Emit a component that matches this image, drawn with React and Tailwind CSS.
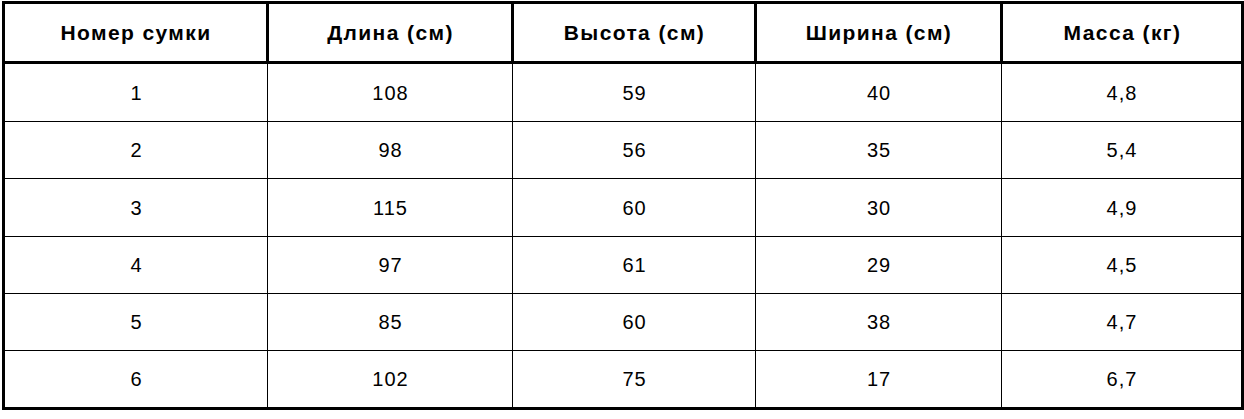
import React from "react";

const headers = ["Номер сумки", "Длина (см)", "Высота (см)", "Ширина (см)", "Масса (кг)"];
const rows = [
  ["1", "108", "59", "40", "4,8"],
  ["2", "98", "56", "35", "5,4"],
  ["3", "115", "60", "30", "4,9"],
  ["4", "97", "61", "29", "4,5"],
  ["5", "85", "60", "38", "4,7"],
  ["6", "102", "75", "17", "6,7"],
];

const rowH = ["h-[59px]", "h-[57px]", "h-[58px]", "h-[57px]", "h-[57px]", "h-[58px]"];

export default function App() {
  return (
    <div className="w-[1244px] h-[419px] bg-white pl-[2px] pt-[1px]" style={{ fontFamily: '"Liberation Sans", Arial, sans-serif' }}>
      <table className="table-fixed border-collapse border-[3px] border-black text-black w-[1239px]">
        <colgroup>
          <col className="w-[264px]" />
          <col className="w-[245px]" />
          <col className="w-[243px]" />
          <col className="w-[246px]" />
          <col className="w-[241px]" />
        </colgroup>
        <thead>
          <tr className="h-[60px]">
            {headers.map((h) => (
              <th key={h} className="border-[3px] border-black font-bold text-[21px] tracking-[1.4px] text-center align-middle p-0 pl-[1px]">
                {h}
              </th>
            ))}
          </tr>
        </thead>
        <tbody>
          {rows.map((r, i) => (
            <tr key={i} className={rowH[i]}>
              {r.map((c, j) => (
                <td key={j} className="border border-black text-[20px] tracking-[1px] text-center align-middle p-0 pl-[1px]">
                  {c}
                </td>
              ))}
            </tr>
          ))}
        </tbody>
      </table>
    </div>
  );
}
